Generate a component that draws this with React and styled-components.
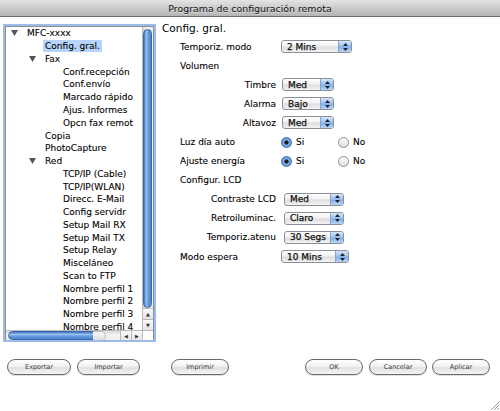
import React from "react";
import styled, { createGlobalStyle } from "styled-components";

const Global = createGlobalStyle`
  html, body { margin: 0; padding: 0; background: #fff; }
  body { width: 500px; height: 411px; overflow: hidden; font-family: "DejaVu Sans", "Liberation Sans", sans-serif; }
`;

const Window = styled.div`
  position: relative;
  width: 500px;
  height: 411px;
  background: #fff;
  display: flex;
  flex-direction: column;
  overflow: hidden;
`;

const TitleBar = styled.div`
  height: 16px;
  flex: none;
  background: linear-gradient(#e4e4e4, #c9c9c9 55%, #b4b4b4);
  border-bottom: 1px solid #6f6f6f;
  display: flex;
  align-items: center;
  justify-content: center;
  font-size: 9.4px;
  color: #1e1e1e;
  -webkit-text-stroke: 0.1px #1e1e1e;
  text-shadow: 0 1px 0 rgba(255, 255, 255, 0.5);
`;

const Main = styled.div`
  display: flex;
  margin-top: 3px;
  height: 322px;
  flex: none;
`;

const TreeFrame = styled.div`
  margin: 6px 0 0 5px;
  width: 147px;
  height: 312px;
  border: 1px solid #8f8f8f;
  outline: 2px solid #9bbce9;
  display: grid;
  grid-template-columns: 1fr 11px;
  grid-template-rows: 1fr 11px;
  background: #fff;
`;

const TreeContent = styled.div`
  overflow: hidden;
  font-size: 9px;
  color: #000;
  -webkit-text-stroke: 0.1px #000;
`;

const Row = styled.div`
  height: 12.78px;
  display: flex;
  align-items: center;
  padding-left: ${(p) => 5 + p.$level * 18}px;
  white-space: nowrap;
`;

const Twisty = styled.span`
  width: 16px;
  flex: none;
  display: flex;
  align-items: center;
`;

const Label = styled.span`
  padding: 1px 2px;
  margin-left: -2px;
  background: ${(p) => (p.$selected ? "#b7d5fc" : "transparent")};
`;

const VScroll = styled.div`
  display: flex;
  flex-direction: column;
  border-left: 1px solid #b9b9b9;
  background: linear-gradient(90deg, #d9d9d9, #f4f4f4 40%, #ececec);
`;

const VThumb = styled.div`
  margin: 2px 1px 0 0;
  height: 277px;
  border-radius: 5px;
  border: 1px solid #3d68a8;
  background: linear-gradient(90deg, #3f74c4, #9cc2f2 35%, #6c9ee0 55%, #4c82cf);
`;

const VArrows = styled.div`
  margin-top: auto;
  display: flex;
  flex-direction: column;
  border-top: 1px solid #b9b9b9;
`;

const Arrow = styled.div`
  height: ${(p) => p.$h || 10}px;
  width: ${(p) => p.$w || "auto"};
  display: flex;
  align-items: center;
  justify-content: center;
  font-size: 5px;
  color: #333;
  border-${(p) => p.$side}: 1px solid #b9b9b9;
  background: linear-gradient(#fafafa, #e4e4e4);
`;

const HScroll = styled.div`
  display: flex;
  align-items: stretch;
  border-top: 1px solid #b9b9b9;
  background: linear-gradient(#d9d9d9, #f4f4f4 40%, #ececec);
`;

const HThumb = styled.div`
  margin: 0 0 1px 2px;
  width: 93px;
  border-radius: 5px;
  border: 1px solid #3d68a8;
  background: linear-gradient(#3f74c4, #9cc2f2 35%, #6c9ee0 55%, #4c82cf);
`;

const HTrackEnd = styled.div`
  width: 12px;
  margin-left: -10px;
  border-radius: 0 6px 6px 0;
  border: 1px solid #bdbdbd;
  border-left: none;
  background: linear-gradient(#f7f7f7, #dedede);
`;

const HArrows = styled.div`
  margin-left: auto;
  display: flex;
  border-left: 1px solid #b9b9b9;
`;

const Corner = styled.div`
  border-top: 1px solid #b9b9b9;
  border-left: 1px solid #b9b9b9;
  background: #fff;
`;

const Settings = styled.div`
  margin-left: 8px;
  display: flex;
  flex-direction: column;
`;

const Heading = styled.div`
  font-size: 10.5px;
  line-height: 16px;
  height: 17px;
  color: #000;
`;

const Grid = styled.div`
  display: grid;
  grid-template-columns: 96px auto;
  column-gap: 5px;
  grid-auto-rows: 19.1px;
  padding-left: 18px;
  font-size: 9px;
  color: #000;
  -webkit-text-stroke: 0.1px #000;
  align-items: center;
`;

const FieldLabel = styled.div`
  grid-column: ${(p) => (p.$wide ? "1 / 3" : "1")};
  justify-self: ${(p) => (p.$sub ? "end" : "start")};
  white-space: nowrap;
`;

const Popup = styled.div`
  width: ${(p) => p.$w}px;
  margin-left: ${(p) => p.$shift || 0}px;
  height: 13px;
  box-sizing: border-box;
  border: 1px solid #8a8f98;
  border-radius: 3px;
  display: flex;
  align-items: stretch;
  background: linear-gradient(#ffffff, #f1f1f1 45%, #dedede 55%, #f3f3f3);
  overflow: hidden;
`;

const PopupText = styled.span`
  flex: 1;
  padding-left: 5px;
  display: flex;
  align-items: center;
  font-size: 9px;
  color: #111;
  -webkit-text-stroke: 0.25px #111;
`;

const PopupCap = styled.span`
  width: 12px;
  display: flex;
  align-items: center;
  justify-content: center;
  border-left: 1px solid #8aa3c6;
  background: linear-gradient(#d5e6fa, #9ec4f1 45%, #7fb0ec 55%, #b9d6f7);
`;

const RadioGroup = styled.div`
  display: flex;
`;

const RadioOption = styled.label`
  width: 57px;
  display: flex;
  align-items: center;
  gap: 4px;
  font-size: 9px;
  color: #000;
`;

const RadioDot = styled.span`
  width: 11px;
  height: 11px;
  box-sizing: border-box;
  border-radius: 50%;
  border: 1px solid ${(p) => (p.$on ? "#3f6aa8" : "#8d8d8d")};
  background: ${(p) =>
    p.$on
      ? "radial-gradient(circle, #1b1b1b 0 1.8px, #7fb0ec 2.4px, #4a80d0 100%)"
      : "linear-gradient(#fdfdfd, #e0e0e0)"};
  flex: none;
`;

const ButtonBar = styled.div`
  display: flex;
  align-items: center;
  margin-top: 17px;
  padding: 0 10px 0 7px;
  height: 16px;
`;

const Button = styled.button`
  width: ${(p) => p.$w}px;
  height: 16px;
  margin-left: ${(p) => p.$ml || 0}px;
  padding: 0;
  border: 1px solid #6a6a6a;
  border-radius: 8px;
  background: linear-gradient(#ffffff, #f2f2f2 45%, #e0e0e0 55%, #f5f5f5);
  font-family: "DejaVu Sans", "Liberation Sans", sans-serif;
  font-size: 6.5px;
  color: #3a3a3a;
  box-shadow: 0 1px 0 rgba(0, 0, 0, 0.12);
`;

const Spacer = styled.div`
  flex: 1;
`;

const Grip = styled.svg`
  position: absolute;
  right: 0;
  bottom: 0;
`;

const Tri = () => (
  <svg width="7" height="6" viewBox="0 0 7 6">
    <path d="M0 0 L7 0 L3.5 6 Z" fill="#555" />
  </svg>
);

const UpDown = () => (
  <svg width="5" height="8" viewBox="0 0 5 8">
    <path d="M2.5 0 L5 3 L0 3 Z M2.5 8 L5 5 L0 5 Z" fill="#222" />
  </svg>
);

const tree = [
  { t: "MFC-xxxx", l: 0, open: true },
  { t: "Config. gral.", l: 1, sel: true },
  { t: "Fax", l: 1, open: true },
  { t: "Conf.recepción", l: 2 },
  { t: "Conf.envío", l: 2 },
  { t: "Marcado rápido", l: 2 },
  { t: "Ajus. Informes", l: 2 },
  { t: "Opcn fax remot", l: 2 },
  { t: "Copia", l: 1 },
  { t: "PhotoCapture", l: 1 },
  { t: "Red", l: 1, open: true },
  { t: "TCP/IP (Cable)", l: 2 },
  { t: "TCP/IP(WLAN)", l: 2 },
  { t: "Direcc. E-Mail", l: 2 },
  { t: "Config servidr", l: 2 },
  { t: "Setup Mail RX", l: 2 },
  { t: "Setup Mail TX", l: 2 },
  { t: "Setup Relay", l: 2 },
  { t: "Misceláneo", l: 2 },
  { t: "Scan to FTP", l: 2 },
  { t: "Nombre perfil 1", l: 2 },
  { t: "Nombre perfil 2", l: 2 },
  { t: "Nombre perfil 3", l: 2 },
  { t: "Nombre perfil 4", l: 2 },
];

const Select = ({ value, w, shift }) => (
  <Popup $w={w} $shift={shift}>
    <PopupText>{value}</PopupText>
    <PopupCap>
      <UpDown />
    </PopupCap>
  </Popup>
);

const Radios = ({ on }) => (
  <RadioGroup>
    <RadioOption>
      <RadioDot $on={on === "Si"} />
      Si
    </RadioOption>
    <RadioOption>
      <RadioDot $on={on === "No"} />
      No
    </RadioOption>
  </RadioGroup>
);

export default function App() {
  return (
    <Window>
      <Global />
      <TitleBar>Programa de configuración remota</TitleBar>
      <Main>
        <TreeFrame>
          <TreeContent>
            {tree.map((n) => (
              <Row key={n.t} $level={n.l}>
                <Twisty>{n.open ? <Tri /> : null}</Twisty>
                <Label $selected={n.sel}>{n.t}</Label>
              </Row>
            ))}
          </TreeContent>
          <VScroll>
            <VThumb />
            <VArrows>
              <Arrow $side="bottom">▲</Arrow>
              <Arrow $side="none">▼</Arrow>
            </VArrows>
          </VScroll>
          <HScroll>
            <HThumb />
            <HTrackEnd />
            <HArrows>
              <Arrow $h={10} $w="10px" $side="right">◀</Arrow>
              <Arrow $h={10} $w="10px" $side="none">▶</Arrow>
            </HArrows>
          </HScroll>
          <Corner />
        </TreeFrame>
        <Settings>
          <Heading>Config. gral.</Heading>
          <Grid>
            <FieldLabel>Temporiz. modo</FieldLabel>
            <Select value="2 Mins" w={71} />
            <FieldLabel $wide>Volumen</FieldLabel>
            <FieldLabel $sub>Timbre</FieldLabel>
            <Select value="Med" w={52} shift={1} />
            <FieldLabel $sub>Alarma</FieldLabel>
            <Select value="Bajo" w={52} shift={1} />
            <FieldLabel $sub>Altavoz</FieldLabel>
            <Select value="Med" w={52} shift={1} />
            <FieldLabel>Luz día auto</FieldLabel>
            <Radios on="Si" />
            <FieldLabel>Ajuste energía</FieldLabel>
            <Radios on="Si" />
            <FieldLabel $wide>Configur. LCD</FieldLabel>
            <FieldLabel $sub>Contraste LCD</FieldLabel>
            <Select value="Med" w={60} shift={3} />
            <FieldLabel $sub>Retroiluminac.</FieldLabel>
            <Select value="Claro" w={60} shift={3} />
            <FieldLabel $sub>Temporiz.atenu</FieldLabel>
            <Select value="30 Segs" w={60} shift={3} />
            <FieldLabel>Modo espera</FieldLabel>
            <Select value="10 Mins" w={68} />
          </Grid>
        </Settings>
      </Main>
      <ButtonBar>
        <Button $w={64}>Exportar</Button>
        <Button $w={63} $ml={6}>Importar</Button>
        <Button $w={58} $ml={31}>Imprimir</Button>
        <Spacer />
        <Button $w={58}>OK</Button>
        <Button $w={58} $ml={6}>Cancelar</Button>
        <Button $w={58} $ml={5}>Aplicar</Button>
      </ButtonBar>
      <Grip width="11" height="11" viewBox="0 0 11 11">
        <path d="M10 2 L2 10 M10 5 L5 10 M10 8 L8 10" stroke="#9a9a9a" strokeWidth="1" />
      </Grip>
    </Window>
  );
}
